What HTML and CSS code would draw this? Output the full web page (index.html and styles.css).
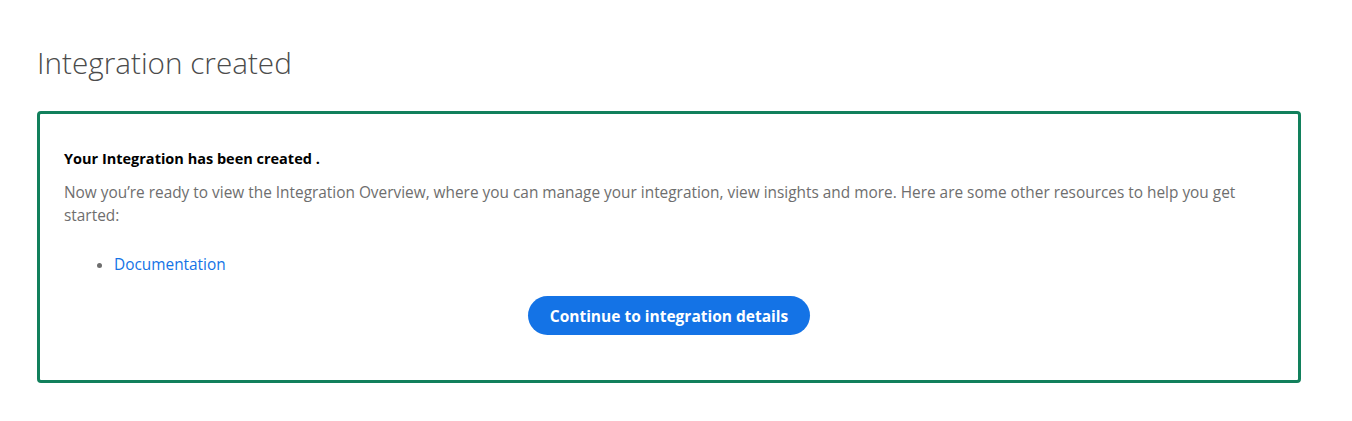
FILE: index.html
```html
<!DOCTYPE html>
<html>
<head>
	<title>Integration created</title>
	<link rel="stylesheet" href="styles.css">
</head>
<body>
	<div class="page">
		<h1 class="page-title">Integration created</h1>
		<div class="success-box">
			<p class="success-title">Your Integration has been created .</p>
			<p class="success-text">Now you’re ready to view the Integration Overview, where you can manage your integration, view insights and more. Here are some other resources to help you get started:</p>
			<ul class="resource-list">
				<li><a href="#">Documentation</a></li>
			</ul>
			<div class="actions">
				<button class="continue-btn">Continue to integration details</button>
			</div>
		</div>
	</div>
</body>
</html>
```

FILE: styles.css
```css
body {
  font-family: "Open Sans", "Noto Sans", Arial, sans-serif;
  margin: 0;
  padding: 0;
  background: #fff;
}

.page {
  padding: 40px 51px 0 37px;
}

.page-title {
  font-size: 29.7px;
  font-weight: 300;
  color: #4b4b4b;
  margin: 0 0 25px 0;
  line-height: 46px;
}

.success-box {
  border: 3px solid #12805c;
  border-radius: 4px;
  padding: 35px 24px 45px 24px;
}

.success-title {
  font-size: 14.5px;
  font-weight: 700;
  color: #000;
  margin: 0 0 12px 0;
  line-height: 20px;
}

.success-text {
  font-size: 15.4px;
  color: #6e6e6e;
  margin: 0;
  line-height: 23px;
}

.resource-list {
  margin: 26px 0 0 0;
  padding-left: 50px;
  color: #6e6e6e;
  font-size: 15.4px;
  line-height: 23px;
}

.resource-list a {
  color: #1473e6;
  text-decoration: none;
}

.actions {
  text-align: center;
  margin-top: 20px;
}

.continue-btn {
  font-family: inherit;
  font-size: 15.5px;
  font-weight: 700;
  color: #fff;
  background-color: #1473e6;
  border: none;
  border-radius: 20px;
  height: 39px;
  padding: 0 22px;
  cursor: pointer;
}
```
